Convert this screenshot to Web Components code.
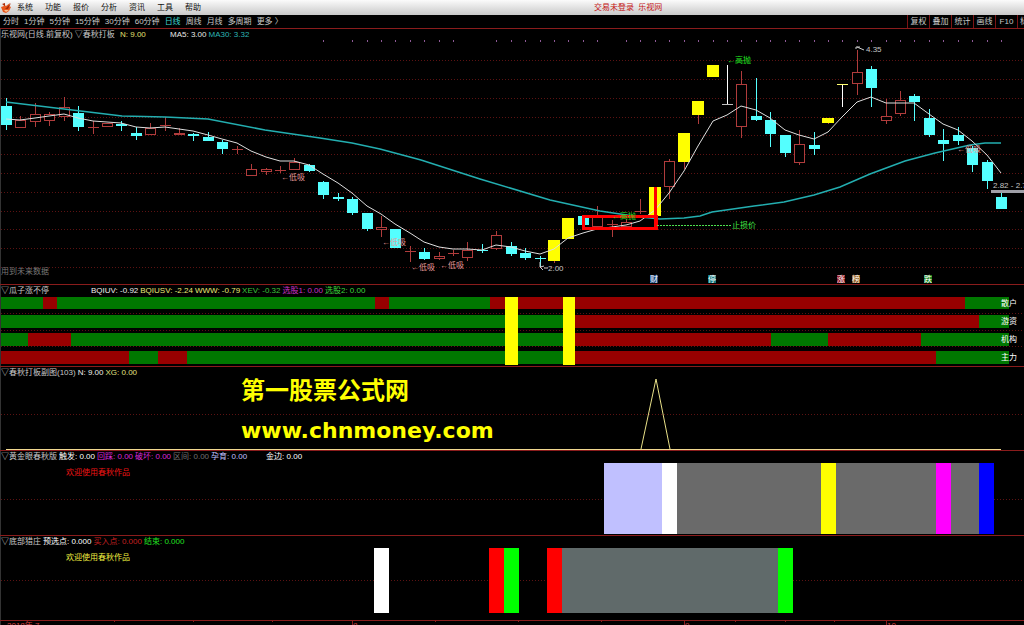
<!DOCTYPE html>
<html lang="zh-CN">
<head>
<meta charset="utf-8">
<title>乐视网 日线</title>
<style>
html{background:#000}
body{margin:0;background:#000;color:#c8c8c8;font:8px/11px "Liberation Sans","Noto Sans CJK SC",sans-serif;overflow:hidden}
</style>
</head>
<body>
<stock-app></stock-app>
<script>
const NS = 'font-family:"Liberation Sans","Noto Sans CJK SC",sans-serif';

class MenuBar extends HTMLElement {
  constructor() {
    super();
    this.attachShadow({mode: 'open'}).innerHTML = `<style>
:host{display:grid;grid-template-columns:58% 1fr;align-items:center;height:15px;background:linear-gradient(#fbfbfb,#c9c9c9)}
nav{display:flex;align-items:center;gap:12px;padding-left:1px}
svg{display:block;width:11px;height:12px;margin-right:-7px}
button{all:unset;color:#111;cursor:default;white-space:nowrap}
output{color:#c41212}
</style>
<nav><svg viewBox="0 0 11 12" aria-hidden="true"><path d="M0 5 3 4 2 2 5 4 9 1 8 4 10 5 8 9 5 11 2 10Z" fill="#e8571c"/><path d="M1 2 4 1 4 4ZM4 7 10 1 7 7Z" fill="#a82a08"/><path d="M3 8 8 8 5 10Z" fill="#ffc08a"/></svg>
${['系统','功能','报价','分析','资讯','工具','帮助'].map(t => `<button type="button">${t}</button>`).join('')}</nav>
<output>交易未登录&nbsp; 乐视网</output>`;
  }
}
customElements.define('menu-bar', MenuBar);

class PeriodBar extends HTMLElement {
  constructor() {
    super();
    const left = ['分时','1分钟','5分钟','15分钟','30分钟','60分钟','日线','周线','月线','多周期','更多 〉'];
    const right = ['复权','叠加','统计','画线','F10','标'];
    this.attachShadow({mode: 'open'}).innerHTML = `<style>
:host{display:flex;justify-content:space-between;height:13px;background:#000}
div{display:flex;align-items:center}
.periods{gap:5px;padding-left:3px}
button{all:unset;white-space:nowrap;cursor:default}
.on{color:#3fd8d0}
.tools button{box-sizing:border-box;width:22px;line-height:13px;text-align:center;border-left:1px solid #7c1414;overflow:hidden}
.tools button:last-child{width:7px;text-align:left;padding-left:2px}
</style>
<div class="periods">${left.map(t => `<button type="button"${t === '日线' ? ' class="on"' : ''}>${t}</button>`).join('')}</div>
<div class="tools">${right.map(t => `<button type="button">${t}</button>`).join('')}</div>`;
  }
}
customElements.define('period-bar', PeriodBar);

class ChartPanel extends HTMLElement {
  constructor() {
    super();
    this.attachShadow({mode: 'open'}).innerHTML = `<style>
:host{display:block;border-top:1px solid #8a1c1c}
header{display:flex;gap:2px;height:11px;padding-left:1px;white-space:nowrap}
</style><header><slot name="legend"></slot></header><slot></slot>`;
  }
}
customElements.define('chart-panel', ChartPanel);

/* Kinds: d falling, u rising, y limit-up, w one-price bar. Values: kind, body top, body bottom, high, low. */
const candles = [
['d',106,125,98,130],['u',120,128,116,128],['u',114,122,103,127],['u',114,121,112,126],['u',107,117,97,121],
['d',113,127,106,131],['u',127,127,121,134],['u',123,127,123,127],['d',124,126,121,131],['d',133,136,127,140],
['u',128,135,123,135],['u',125,125,117,131],['u',133,135,128,135],['d',134,136,133,141],['d',137,141,132,141],
['d',142,149,140,154],['u',149,149,146,154],['u',169,176,164,176],['u',169,172,168,175],['u',170,170,166,173],
['u',162,170,158,170],['d',165,171,164,172],['d',182,195,181,199],['d',197,199,193,201],['d',199,213,197,215],
['d',213,229,213,231],['u',227,230,216,237],['d',229,248,229,248],['u',251,251,246,262],['d',252,259,248,260],
['u',256,259,252,260],['u',253,254,250,256],['u',250,258,242,261],['d',250,251,244,253],['u',235,249,231,250],
['d',246,254,242,256],['d',253,258,248,260],['d',258,259,256,267],['y',240,261,240,263],['y',218,239,218,239],
['d',216,225,215,225],['u',217,227,206,227],['u',224,225,220,237],['u',222,227,219,227],['u',211,211,199,214],
['y',187,216,187,216],['u',161,187,159,199],['y',133,162,133,169],['y',101,115,101,124],['y',65,77,65,77],
['w',104,104,65,104],['u',84,127,71,138],['d',116,120,78,121],['d',120,134,112,147],['d',135,153,135,157],
['u',144,163,130,165],['d',145,149,132,155],['y',118,123,118,124],['w',84,84,84,107],['u',72,84,50,95],
['d',69,88,66,107],['u',116,121,99,124],['u',100,114,91,116],['d',96,102,94,121],['d',118,135,109,137],
['d',140,144,129,161],['d',135,141,127,145],['d',148,165,146,172],['d',162,181,160,189],['d',197,209,192,209]];
const barX = i => Math.round(6 + 14.42 * i);
const ma5 = [119,120,118,116,114,118,121,122,123,127,128,127,129,131,135,139,143,151,157,161,161,165,174,183,193,206,214,224,233,242,247,249,249,250,245,247,251,254,249,238,233,229,227,225,221,210,193,171,146,121,115,106,110,118,130,135,139,132,117,102,97,103,103,103,114,124,130,141,155,173];
const tint = {d:'#54ffff', u:'#b03c3c', y:'#ffff00', w:'#ffffff'};
const rect = (x, y, w, h, f) => `<rect x="${x}" y="${y}" width="${w}" height="${h}" fill="${f}"/>`;
const text = (x, y, f, s, extra = '') => `<text x="${x}" y="${y}" fill="${f}" ${extra}>${s}</text>`;
const grid = ys => ys.map(y => `<path d="M1 ${y}.5H1024" stroke="#5c1212" stroke-dasharray="1 2"/>`).join('');
const wrap = (top, h, body) => `<style>:host{display:block}svg{display:block;width:100%;height:auto;overflow:visible;shape-rendering:crispEdges;${NS};font-size:8px}.s{shape-rendering:auto}</style>
<svg viewBox="0 ${top} 1024 ${h}" role="img">${body}</svg>`;

class PriceChart extends HTMLElement {
  constructor() {
    super();
    let b = grid([60,79,98,117,135,154,173,192,211,229,248,267]);
    for (let i = 22; i < 70; i++) if (![23,32,33,42].includes(i)) b += rect(barX(i), 40, 1, 2, '#8d5a96');
    candles.forEach(([k, t, e, hi, lo], i) => {
      const x = barX(i), c = tint[k];
      if (k === 'w') {
        b += rect(x, hi, 1, lo - hi, c) + rect(x - 5, t, 11, 1, i === 58 ? '#ffff70' : '#c0c0c0');
      } else if (k === 'u') {
        if (hi < t) b += rect(x, hi, 1, t - hi, c);
        if (lo > e) b += rect(x, e, 1, lo - e, c);
        b += e - t < 2 ? rect(x - 5, t, 11, 1, c) : `<rect x="${x - 4.5}" y="${t + .5}" width="10" height="${e - t - 1}" fill="#000" stroke="${c}"/>`;
      } else {
        b += rect(x, hi, 1, lo - hi, k === 'y' ? '#b03c3c' : c) + rect(x - (k === 'y' ? 6 : 5), t, k === 'y' ? 12 : 11, e - t, c);
      }
    });
    b += `<path class="s" d="M6 102 64 109 122 116 165 117 208 119 265 130 320 138 352 143 380 149 421 160 480 179 550 200 600 211 640 217 660 219 684 218 700 216 712 212 754 206 784 202 814 195 840 187 870 174 905 161 935 153 970 145 985 143 1001 143" fill="none" stroke="#23aeb0" stroke-width="1.5"/>`;
    b += `<polyline class="s" points="${ma5.map((y, i) => barX(i) + ',' + y).join(' ')}" fill="none" stroke="#dedede"/>`;
    b += `<path d="M583 216H656V228H583Z" fill="none" stroke="#f00" stroke-width="3"/>` + rect(654, 187, 3, 40, '#f00');
    b += `<path d="M657 225.5H731" stroke="#4ee04e" stroke-dasharray="2 1"/>` + text(732, 228, '#44e344', '止损价');
    b += [[281,180],[382,245],[411,270],[440,268],[957,152]].map(([x, y]) => text(x, y, '#e59a9a', '←低吸')).join('');
    b += text(727, 63, '#22e822', '←高抛') + text(612, 219, '#22d822', '←高抛');
    b += `<path class="s" d="M856 49V47H860M857 47 864 50M544 268H548M540 262V267L543 270M540 267 544 266" fill="none" stroke="#ccc"/>`;
    b += text(866, 52, '#c4c4c4', '4.35') + text(548, 271, '#c4c4c4', '2.00') + text(993, 188, '#c4c4c4', '2.82 - 2.71');
    b += rect(991, 190, 33, 3, '#a0a0a8') + text(1, 274, '#777', '用到未来数据');
    b += [[650,'#174880','财'],[708,'#167a80','停'],[837,'#8c1520','涨'],[852,'#8c5618','榜'],[924,'#15801c','跌']].map(([x, f, s]) => rect(x, 275, 8, 8, f) + text(x, 282, '#fff', s)).join('');
    this.attachShadow({mode: 'open'}).innerHTML = wrap(40, 244, b);
  }
}
customElements.define('price-chart', PriceChart);

class FlowChart extends HTMLElement {
  constructor() {
    super();
    const rows = [
      [297,12,[43,57,375,389,490,965,1009],'g','散户'],
      [315,13,[575,979,1009],'g','游资'],
      [333,13,[28,71,575,771,828,921,1009],'g','机构'],
      [351,13,[129,158,187,575,936,1009],'r','主力']];
    let b = grid([313,330,346]);
    for (const [y, h, ends, first] of rows) {
      let x = 1, green = first === 'g';
      for (const e of ends) { b += rect(x, y, e - x, h, green ? '#007800' : '#980000'); x = e; green = !green; }
    }
    b += rect(505, 297, 13, 68, '#ff0') + rect(563, 297, 12, 68, '#ff0');
    b += rows.map(r => text(1001, r[0] + 9, '#fff', r[4])).join('');
    this.attachShadow({mode: 'open'}).innerHTML = wrap(296, 70, b);
  }
}
customElements.define('flow-chart', FlowChart);

class SignalChart extends HTMLElement {
  constructor() {
    super();
    this.attachShadow({mode: 'open'}).innerHTML = wrap(378, 72, grid([414]) +
      `<path d="M6 449.5H1001" stroke="#f0d890"/><path class="s" d="M641 449 656 379 670 449" fill="none" stroke="#e8e088"/>` +
      text(241, 399, '#ff0', '第一股票公式网', 'font-size="24" font-weight="700"') +
      text(241, 438, '#ff0', 'www.chnmoney.com', 'font-size="22" font-weight="700" style="font-family:\'DejaVu Sans\',sans-serif"'));
  }
}
customElements.define('signal-chart', SignalChart);

class BlockChart extends HTMLElement {
  connectedCallback() {
    const top = +this.getAttribute('top');
    const blocks = this.getAttribute('blocks').trim().split(/\s+/).map(s => s.split(','));
    const y = +this.getAttribute('block-top'), h = +this.getAttribute('block-height');
    this.attachShadow({mode: 'open'}).innerHTML = wrap(top, this.getAttribute('height'),
      grid([+this.getAttribute('line')]) + blocks.map(([a, e, c]) => rect(+a, y, e - a, h, c)).join('') +
      text(66, top + 13, this.getAttribute('note-color'), '欢迎使用春秋作品'));
  }
}
customElements.define('block-chart', BlockChart);

class DateAxis extends HTMLElement {
  constructor() {
    super();
    this.attachShadow({mode: 'open'}).innerHTML = `<style>:host{display:block;border-top:1px solid #8a1c1c;overflow:hidden}svg{display:block;width:100%;height:auto;${NS};font-size:8px}</style>
<svg viewBox="0 621 1024 4" role="img">${[114,193,272,352,435,518,601,684,735,785,834,886].map(x => rect(x, 621, 1, x === 352 || x === 684 || x === 886 ? 4 : 1, '#8a1c1c')).join('')}
${text(7, 628, '#d04040', '2018年 7') + text(353, 628, '#d04040', '8') + text(685, 628, '#d04040', '9') + text(887, 628, '#d04040', '10')}</svg>`;
  }
}
customElements.define('date-axis', DateAxis);

class StockApp extends HTMLElement {
  constructor() {
    super();
    const L = (s, c = '#c8c8c8', w = 0) => `<span slot="legend" style="color:${c}${w ? `;min-width:${w}px` : ''}">${s}</span>`;
    this.attachShadow({mode: 'open'}).innerHTML = `<style>:host{display:block}main{display:block;box-shadow:inset 1px 0 #333}</style>
<menu-bar></menu-bar><period-bar></period-bar>
<main>
<chart-panel>${L('乐视网(日线.前复权) ▽春秋打板','#c8c8c8',117)}${L('N: 9.00','#e0e070',48)}${L('MA5: 3.00','#e8e8e8')}${L('MA30: 3.32','#2cb4b4')}<price-chart></price-chart></chart-panel>
<chart-panel>${L('▽瓜子涨不停','#c8c8c8',88)}${L('BQIUV: -0.92','#eee')}${L('BQIUSV: -2.24','#eaea78')}${L('WWW: -0.79','#eaea78')}${L('XEV: -0.32','#3cc43c')}${L('选股1: 0.00','#c832c8')}${L('选股2: 0.00','#3cd83c')}<flow-chart></flow-chart></chart-panel>
<chart-panel>${L('▽春秋打板副图(103)')}${L('N: 9.00','#eee')}${L('XG: 0.00','#e0e080')}<signal-chart></signal-chart></chart-panel>
<chart-panel>${L('▽黄金眼春秋版')}${L('触发: 0.00','#fff')}${L('回踩: 0.00','#d828d8')}${L('破坏: 0.00','#d828d8')}${L('区间: 0.00','#707070')}${L('孕育: 0.00','#c0c0ff',53)}${L('金边: 0.00','#fff')}
<block-chart top="462" height="73" line="499" block-top="463" block-height="71" note-color="#f01414" blocks="604,662,#c0c0ff 662,677,#fff 677,821,#6a6a6a 821,836,#ff0 836,936,#6a6a6a 936,951,#f0f 951,979,#6a6a6a 979,994,#00f"></block-chart></chart-panel>
<chart-panel>${L('▽底部猎庄')}${L('预选点: 0.000','#fff')}${L('买入点: 0.000','#c82020')}${L('结束: 0.000','#20e020')}
<block-chart top="547" height="73" line="580" block-top="548" block-height="65" note-color="#f0f040" blocks="374,389,#fff 489,504,#f00 504,519,#0f0 547,562,#f00 562,778,#606a6a 778,793,#0f0"></block-chart></chart-panel>
<date-axis></date-axis>
</main>`;
  }
}
customElements.define('stock-app', StockApp);
</script>
</body>
</html>
